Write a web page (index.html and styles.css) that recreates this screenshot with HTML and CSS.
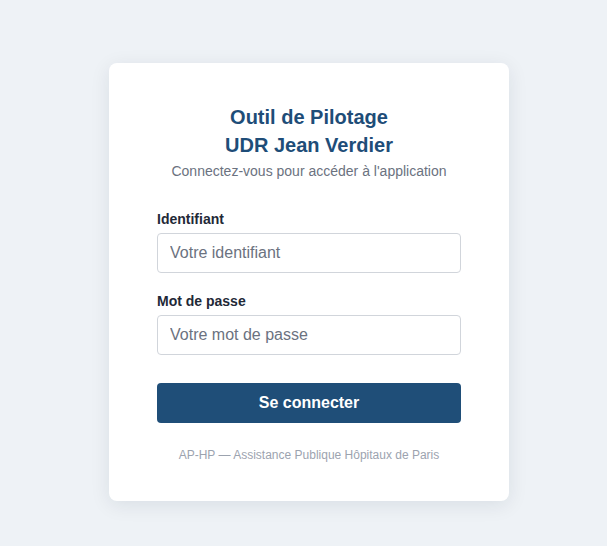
FILE: index.html
```html
<!DOCTYPE html>
<html lang="fr">
<head>
<meta charset="utf-8">
<title>Connexion — Outil de Pilotage</title>
<link rel="stylesheet" href="styles.css">
</head>
<body>
<main class="page">
  <section class="card">
    <header class="card-header">
      <h1 class="title">Outil de Pilotage<br>UDR Jean Verdier</h1>
      <p class="subtitle">Connectez-vous pour accéder à l'application</p>
    </header>
    <form class="form">
      <div class="field">
        <label class="label" for="login">Identifiant</label>
        <input class="input" id="login" type="text" placeholder="Votre identifiant">
      </div>
      <div class="field">
        <label class="label" for="password">Mot de passe</label>
        <input class="input" id="password" type="password" placeholder="Votre mot de passe">
      </div>
      <button class="button" type="button">Se connecter</button>
    </form>
    <p class="footer">AP-HP — Assistance Publique Hôpitaux de Paris</p>
  </section>
</main>
</body>
</html>
```
FILE: styles.css
```css
* { box-sizing: border-box; }
html, body { margin: 0; padding: 0; }
body {
  background: #eef2f6;
  font-family: "Liberation Sans", Arial, sans-serif;
  color: #1f2937;
}
.page {
  min-height: 100vh;
  display: flex;
  justify-content: center;
  align-items: flex-start;
  padding: 63px 0 0 11px;
}
.card {
  width: 400px;
  background: #ffffff;
  border-radius: 8px;
  box-shadow: 0 4px 20px rgba(15, 30, 60, 0.09);
  padding: 40px 48px 39px;
}
.card-header {
  text-align: center;
  margin-bottom: 32px;
}
.title {
  margin: 0;
  font-size: 20px;
  line-height: 28px;
  font-weight: 700;
  color: #1e4d78;
}
.subtitle {
  margin: 4px 0 0;
  font-size: 14px;
  line-height: 16px;
  color: #6b7280;
}
.form { display: flex; flex-direction: column; }
.field { margin-bottom: 20px; }
.label {
  display: block;
  font-size: 14px;
  line-height: 16px;
  font-weight: 700;
  color: #1f2937;
  margin-bottom: 6px;
}
.input {
  display: block;
  width: 100%;
  height: 40px;
  padding: 0 12px;
  border: 1px solid #d1d5db;
  border-radius: 4px;
  font-family: inherit;
  font-size: 16px;
  color: #1f2937;
  background: #fff;
  outline: none;
}
.input::placeholder { color: #6b7280; opacity: 1; }
.button {
  margin-top: 8px;
  height: 40px;
  width: 100%;
  border: none;
  border-radius: 4px;
  background: #1f4e78;
  color: #ffffff;
  font-family: inherit;
  font-size: 16px;
  font-weight: 700;
  cursor: pointer;
}
.footer {
  margin: 25px 0 0;
  text-align: center;
  font-size: 12px;
  line-height: 14px;
  color: #9ca3af;
}
```
